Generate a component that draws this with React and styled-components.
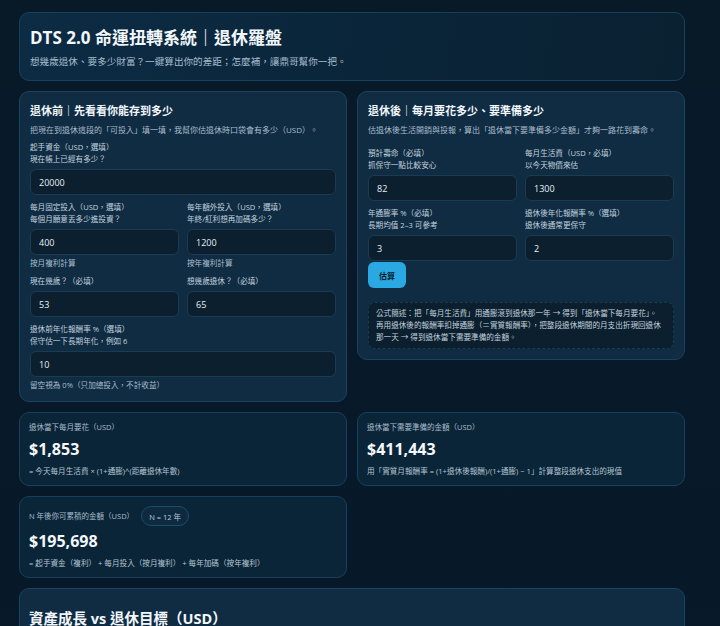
import React from "react";
import styled, { createGlobalStyle } from "styled-components";

const Global = createGlobalStyle`
  html, body { margin: 0; padding: 0; }
  body {
    background: linear-gradient(180deg, #081a28 0%, #07192a 100%);
    font-family: "Open Sans", "Noto Sans CJK TC", sans-serif;
    color: #e6eef5;
    min-height: 626px;
  }
`;

const Page = styled.div`
  width: 666px;
  padding: 12px 0 0 19px;
  display: flex;
  flex-direction: column;
  gap: 10px;
`;

const Header = styled.header`
  background: linear-gradient(100deg, #0c2c44 0%, #0a2438 60%, #0a2131 100%);
  border: 1px solid #17405d;
  border-radius: 10px;
  padding: 14px 10px 11px;
`;

const Title = styled.h1`
  margin: 0;
  font-size: 17px;
  line-height: 22px;
  font-weight: 700;
  color: #f2f7fb;
`;

const Subtitle = styled.p`
  margin: 6px 0 0;
  font-size: 9.6px;
  line-height: 14px;
  color: #a7bccd;
`;

const Columns = styled.div`
  display: grid;
  grid-template-columns: 1fr 1fr;
  gap: 10px;
  align-items: start;
`;

const Card = styled.section`
  background: #0f2c43;
  border: 1px solid #1a4360;
  border-radius: 10px;
  padding: 11px 10px 10px;
`;

const CardTitle = styled.h2`
  margin: 0;
  font-size: 11px;
  line-height: 16px;
  font-weight: 700;
  color: #f2f7fb;
`;

const Desc = styled.p`
  margin: 5px 0 0;
  font-size: 8px;
  line-height: 12px;
  color: #a9bccb;
`;

const Fields = styled.div`
  margin-top: ${(p) => p.$top || 5}px;
  display: flex;
  flex-direction: column;
  gap: 6px;
`;

const Row = styled.div`
  display: grid;
  grid-template-columns: 1fr 1fr;
  gap: 8px;
`;

const Field = styled.div`
  display: flex;
  flex-direction: column;
`;

const Label = styled.div`
  font-size: 7.6px;
  line-height: 12px;
  color: #c3d2de;
`;

const Input = styled.input`
  margin-top: 4px;
  box-sizing: border-box;
  width: 100%;
  height: 26px;
  padding: 0 8px;
  background: #0b1f2e;
  border: 1px solid #1a3b52;
  border-radius: 6px;
  color: #e8f0f6;
  font-family: "Open Sans", sans-serif;
  font-size: 9px;
  outline: none;
`;

const Note = styled.div`
  margin-top: 2px;
  font-size: 7.6px;
  line-height: 12px;
  color: #a9bccb;
`;

const Button = styled.button`
  margin-top: 1px;
  width: 38px;
  height: 26px;
  border: none;
  border-radius: 6px;
  background: #2aa8e2;
  color: #061c2c;
  font-family: "Open Sans", "Noto Sans CJK TC", sans-serif;
  font-size: 8px;
  font-weight: 700;
  cursor: pointer;
`;

const Formula = styled.div`
  margin-top: 14px;
  background: #0b1f2e;
  border: 1px dashed #1b3a50;
  border-radius: 7px;
  padding: 4px 7px 5px;
  font-size: 7.6px;
  line-height: 12px;
  color: #c3d2de;
`;

const ResultCard = styled.div`
  background: #0b2538;
  border: 1px solid #17405c;
  border-radius: 10px;
  padding: 8px 9px 8px;
`;

const ResultHead = styled.div`
  display: flex;
  align-items: center;
  gap: 7px;
  min-height: ${(p) => (p.$pill ? "20px" : "12px")};
  margin-top: ${(p) => (p.$pill ? "1px" : "0")};
`;

const ResultLabel = styled.div`
  font-size: 7.5px;
  line-height: 12px;
  color: #a9bccb;
`;

const Pill = styled.span`
  display: inline-flex;
  align-items: center;
  height: 20px;
  box-sizing: border-box;
  padding: 0 7px;
  border: 1px solid #1f4b6a;
  border-radius: 999px;
  background: #0d2a40;
  font-size: 7.5px;
  color: #b9cad8;
`;

const Value = styled.div`
  margin-top: ${(p) => (p.$pill ? "4px" : "5px")};
  font-size: 16px;
  line-height: 22px;
  font-weight: 700;
  color: #f4f8fb;
`;

const ResultNote = styled.div`
  margin-top: 5px;
  font-size: 7.6px;
  line-height: 12px;
  color: #b3c4d2;
`;

const ChartCard = styled.section`
  background: #0f2c43;
  border: 1px solid #1a4360;
  border-radius: 10px;
  padding: 20px 9px 20px;
  min-height: 220px;
`;

const ChartTitle = styled.h2`
  margin: 0;
  font-size: 14.5px;
  line-height: 20px;
  font-weight: 700;
  color: #f2f7fb;
`;

const Half = styled.div`
  width: 328px;
`;

export default function App() {
  return (
    <>
      <Global />
      <Page>
        <Header>
          <Title>DTS 2.0 命運扭轉系統｜退休羅盤</Title>
          <Subtitle>想幾歲退休、要多少財富？一鍵算出你的差距；怎麼補，讓鼎哥幫你一把。</Subtitle>
        </Header>

        <Columns>
          <Card>
            <CardTitle>退休前｜先看看你能存到多少</CardTitle>
            <Desc>把現在到退休這段的「可投入」填一填，我幫你估退休時口袋會有多少（USD）。</Desc>
            <Fields>
              <Field>
                <Label>起手資金（USD，選填）<br />現在帳上已經有多少？</Label>
                <Input defaultValue="20000" />
              </Field>
              <Row>
                <Field>
                  <Label>每月固定投入（USD，選填）<br />每個月願意丟多少進投資？</Label>
                  <Input defaultValue="400" />
                  <Note>按月複利計算</Note>
                </Field>
                <Field>
                  <Label>每年額外投入（USD，選填）<br />年終/紅利想再加碼多少？</Label>
                  <Input defaultValue="1200" />
                  <Note>按年複利計算</Note>
                </Field>
              </Row>
              <Row>
                <Field>
                  <Label>現在幾歲？（必填）</Label>
                  <Input defaultValue="53" />
                </Field>
                <Field>
                  <Label>想幾歲退休？（必填）</Label>
                  <Input defaultValue="65" />
                </Field>
              </Row>
              <Field>
                <Label>退休前年化報酬率 %（選填）<br />保守估一下長期年化，例如 6</Label>
                <Input defaultValue="10" />
                <Note>留空視為 0%（只加總投入，不計收益）</Note>
              </Field>
            </Fields>
          </Card>

          <Card>
            <CardTitle>退休後｜每月要花多少、要準備多少</CardTitle>
            <Desc>估退休後生活開銷與投報，算出「退休當下要準備多少金額」才夠一路花到壽命。</Desc>
            <Fields $top={11}>
              <Row>
                <Field>
                  <Label>預計壽命（必填）<br />抓保守一點比較安心</Label>
                  <Input defaultValue="82" />
                </Field>
                <Field>
                  <Label>每月生活費（USD，必填）<br />以今天物價來估</Label>
                  <Input defaultValue="1300" />
                </Field>
              </Row>
              <Row>
                <Field>
                  <Label>年通膨率 %（必填）<br />長期均值 2–3 可參考</Label>
                  <Input defaultValue="3" />
                </Field>
                <Field>
                  <Label>退休後年化報酬率 %（選填）<br />退休後通常更保守</Label>
                  <Input defaultValue="2" />
                </Field>
              </Row>
            </Fields>
            <Button>估算</Button>
            <Formula>
              公式簡述：把「每月生活費」用通膨滾到退休那一年 → 得到「退休當下每月要花」。
              <br />
              再用退休後的報酬率扣掉通膨（＝實質報酬率），把整段退休期間的月支出折現回退休那一天 → 得到退休當下需要準備的金額。
            </Formula>
          </Card>
        </Columns>

        <Columns>
          <ResultCard>
            <ResultHead>
              <ResultLabel>退休當下每月要花（USD）</ResultLabel>
            </ResultHead>
            <Value>$1,853</Value>
            <ResultNote>= 今天每月生活費 × (1+通膨)^(距離退休年數)</ResultNote>
          </ResultCard>
          <ResultCard>
            <ResultHead>
              <ResultLabel>退休當下需要準備的金額（USD）</ResultLabel>
            </ResultHead>
            <Value>$411,443</Value>
            <ResultNote>用「實質月報酬率 = (1+退休後報酬)/(1+通膨) − 1」計算整段退休支出的現值</ResultNote>
          </ResultCard>
        </Columns>

        <Half>
          <ResultCard>
            <ResultHead $pill>
              <ResultLabel>N 年後你可累積的金額（USD）</ResultLabel>
              <Pill>N = 12 年</Pill>
            </ResultHead>
            <Value $pill>$195,698</Value>
            <ResultNote>= 起手資金（複利） + 每月投入（按月複利） + 每年加碼（按年複利）</ResultNote>
          </ResultCard>
        </Half>

        <ChartCard>
          <ChartTitle>資產成長 vs 退休目標（USD）</ChartTitle>
        </ChartCard>
      </Page>
    </>
  );
}
